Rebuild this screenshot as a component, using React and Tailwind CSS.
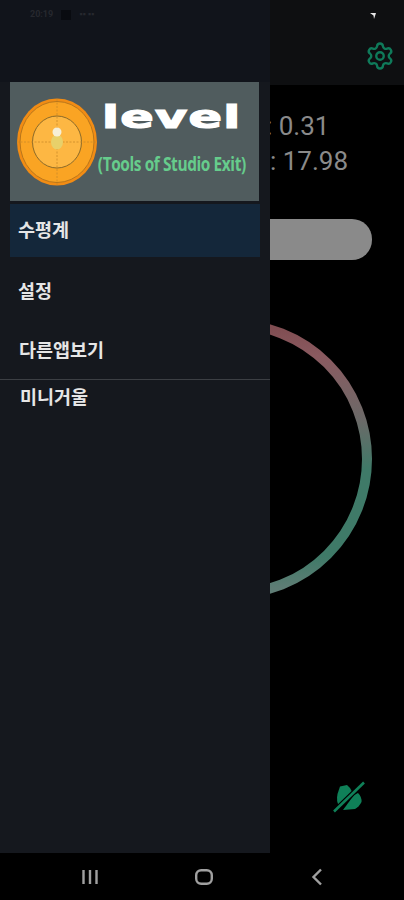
import React from 'react';
import { Settings } from 'lucide-react';

const menuItems = [
  { label: '설정', rowClass: 'h-[60px] pl-[18px]' },
  { label: '다른앱보기', rowClass: 'h-[58px] pl-[19px]' },
];

function TargetLogo() {
  return (
    <svg width="82" height="90" viewBox="0 0 82 90" className="shrink-0">
      <ellipse cx="41" cy="45" rx="40" ry="43.5" fill="#f28c14" />
      <ellipse cx="41" cy="45" rx="37" ry="40.5" fill="#faa423" stroke="#b8761c" strokeWidth="1" />
      <ellipse cx="41" cy="45" rx="24.5" ry="26" fill="#fdb743" stroke="#8a6a2a" strokeWidth="1" />
      <path d="M1 45H81M41 2V88" stroke="#c98a2a" strokeWidth="0.8" strokeDasharray="2 1.5" />
      <ellipse cx="41" cy="45" rx="6" ry="7.5" fill="#e8d06a" />
      <circle cx="41" cy="35" r="4.5" fill="#f6efd8" />
    </svg>
  );
}

function LeafOff() {
  return (
    <svg width="32" height="32" viewBox="0 0 32 32">
      <path d="M7 5.5L14 4Q18 7 19.5 11.5L6 25Q3 20 4.5 13Z" fill="#0f8058" />
      <path d="M21 14L25 12Q29 16 28.5 21Q26 26 22 28L10 29Z" fill="#0f8058" />
      <path d="M1 30.5L31 1.5" stroke="#000" strokeWidth="5" />
      <path d="M1 30.5L31 1.5" stroke="#0f8058" strokeWidth="2.6" />
    </svg>
  );
}

function Drawer() {
  return (
    <aside className="absolute top-0 left-0 h-[853px] w-[270px] flex flex-col bg-[#15181e] font-['Noto_Sans_CJK_KR',sans-serif] font-bold text-[18.5px] text-[#e6e6e6]">
      <div className="h-[82px] shrink-0 bg-[#11141b] -mb-px px-[30px] pt-[8px] text-[9px] text-[#26282e] font-['Roboto',sans-serif] flex gap-2">
        <span>20:19</span>
        <span className="w-[10px] h-[10px] bg-[#090b10] mt-[2px]"></span>
        <span>▪▪ ▪▪</span>
      </div>
      <div className="ml-[10px] mr-[11px] mt-px h-[119px] shrink-0 bg-[#505c5e] flex items-center pl-[6px]">
        <TargetLogo />
        <div className="flex flex-col items-center w-[156px] -ml-[4px]">
          <span className="font-['DejaVu_Sans',sans-serif] font-bold text-[38px] leading-[40px] tracking-[1px] text-white scale-x-[1.3] scale-y-[0.82] [-webkit-text-stroke:1.5px_white] mb-[16px] -mt-[14px]">level</span>
          <span className="font-['Open_Sans',sans-serif] font-bold text-[15px] leading-[20px] text-[#66cc8c] whitespace-nowrap tracking-[-0.4px] scale-x-[1.03] scale-y-[1.25]">(Tools of Studio Exit)</span>
        </div>
      </div>
      <div className="mx-[10px] mt-[3px] h-[53px] shrink-0 bg-[#14273a] flex items-center pl-[8px] pb-px">수평계</div>
      <div className="h-[4px] shrink-0"></div>
      {menuItems.map((item) => (
        <div key={item.label} className={`${item.rowClass} shrink-0 flex items-center`}>
          {item.label}
        </div>
      ))}
      <div className="h-px shrink-0 bg-[#3c3f44]"></div>
      <div className="h-[34px] shrink-0 flex items-center pl-[20px]">미니거울</div>
    </aside>
  );
}

export default function App() {
  return (
    <div className="relative w-[404px] h-[900px] overflow-hidden bg-black flex flex-col font-['Roboto',sans-serif]">
      <header className="h-[85px] shrink-0 bg-[#0e0f11] flex flex-col items-end">
        <svg width="8" height="8" viewBox="0 0 8 8" className="mt-[12px] mr-[27px]">
          <path d="M1 1H7L5 7L4.5 3.5Z" fill="#e8e8e8" />
        </svg>
        <Settings size={30} strokeWidth={1.9} className="text-[#0f7a5a] mt-[21px] mr-[9px]" />
      </header>

      <main className="flex-1 flex flex-col">
        <div className="pt-[24px] text-[26px] leading-[35px] text-[#8a8a8a]">
          <p className="pl-[266px]">: 0.31</p>
          <p className="pl-[270px]">: 17.98</p>
        </div>
        <div className="mt-[40px] ml-[32px] w-[340px] h-[41px] shrink-0 rounded-[20px] bg-[#8a8a8a]"></div>
        <svg width="280" height="280" viewBox="0 0 280 280" className="mt-[59px] ml-[92px] shrink-0">
          <defs>
            <linearGradient id="ringFade" x1="0" y1="0" x2="0" y2="1">
              <stop offset="0" stopColor="#7f4c50" />
              <stop offset="0.12" stopColor="#8a5a60" />
              <stop offset="0.36" stopColor="#6a6a68" />
              <stop offset="0.54" stopColor="#3f7a68" />
              <stop offset="0.86" stopColor="#3f7a68" />
              <stop offset="0.98" stopColor="#5f7d75" />
            </linearGradient>
          </defs>
          <circle cx="140" cy="140" r="135" fill="none" stroke="url(#ringFade)" strokeWidth="10" />
        </svg>
        <div className="flex justify-end mt-auto mb-[40px] mr-[39px]">
          <LeafOff />
        </div>
      </main>

      <nav className="h-[47px] shrink-0 bg-black relative flex items-center text-[#a0a0a0]">
        <svg width="18" height="16" viewBox="0 0 18 16" className="ml-[81px]">
          <path d="M2.5 1V15M9 1V15M15.5 1V15" stroke="currentColor" strokeWidth="2.4" />
        </svg>
        <svg width="18" height="16" viewBox="0 0 18 16" className="ml-[96px]">
          <rect x="1.2" y="1.2" width="15.6" height="13.6" rx="5" fill="none" stroke="currentColor" strokeWidth="2.4" />
        </svg>
        <svg width="12" height="18" viewBox="0 0 12 18" className="ml-[98px]">
          <path d="M10 1.5L2.5 9L10 16.5" fill="none" stroke="currentColor" strokeWidth="2.4" />
        </svg>
      </nav>

      <Drawer />
    </div>
  );
}
